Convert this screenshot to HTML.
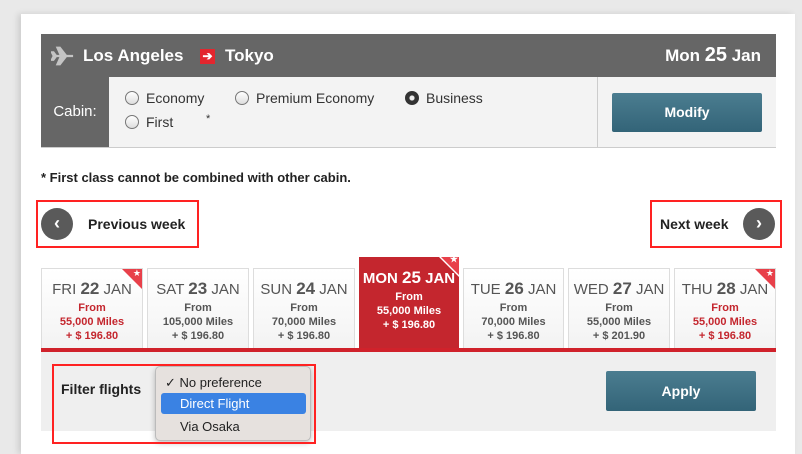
<!DOCTYPE html>
<html><head><meta charset="utf-8"><style>
*{box-sizing:border-box;margin:0;padding:0}
body{width:802px;height:445px;overflow:hidden;background:#e9e9e9;font-family:"Liberation Sans",Arial,sans-serif;position:relative}
.abs{position:absolute}
.panel{left:21px;top:14px;width:774px;height:440px;background:#fff;box-shadow:-3px 0 6px rgba(0,0,0,.12)}
.hdr{left:41px;top:34px;width:735px;height:43px;background:#666;color:#fff;font-weight:bold;font-size:17px}
.cab{left:41px;top:77px;width:735px;height:71px;background:#f3f3f3;border-bottom:1px solid #ccc}
.lbl{left:0;top:0;width:68px;height:70px;background:#666;color:#fff;font-size:15px;line-height:70px;text-align:center}
.rad{font-size:14px;color:#333}
.rad i{display:inline-block;width:14px;height:14px;border:1px solid #777;border-radius:50%;background:linear-gradient(#fff,#ddd);vertical-align:-2px;margin-right:7px}
.btn{background:linear-gradient(#4b7d90,#336478);color:#fff;font-weight:bold;font-size:14px;text-align:center;border-radius:2px}
.red{border:2px solid #f22}
.circ{width:32px;height:32px;border-radius:50%;background:#5a5a5a;color:#fff;text-align:center;line-height:30px;font-size:18px;font-weight:bold}
.tile{top:268px;height:80px;border:1px solid #ddd;border-bottom:none;background:linear-gradient(#fff,#f3f3f3);text-align:center;color:#555;overflow:hidden}
.tile .d{font-size:15px;margin-top:10px}
.tile .d b{font-size:17px}
.tile .p{font-size:11px;font-weight:bold;line-height:14px;margin-top:2px}
.tile.r .p{color:#c4262e}
.tri{position:absolute;right:0;top:0;width:0;height:0;border-top:20px solid #e8404a;border-left:20px solid transparent}
.tri:after{content:"★";position:absolute;right:1px;top:-21px;color:#fff;font-size:9px}
</style></head><body>
<div class="abs panel"></div>
<div class="abs hdr">
 <svg class="abs" style="left:10px;top:11px" width="24" height="22" viewBox="0 0 26 24"><path d="M2 12h22M11 12L7 3h2.5l7 9-7 9H7z M3 12l-2-4h1.5l3 4-3 4H1z" stroke="#c4c4c4" stroke-width="2.5" fill="#c4c4c4"/></svg>
 <span class="abs" style="left:42px;top:12px">Los Angeles</span>
 <span class="abs" style="left:159px;top:15px;width:15px;height:15px;background:#e3262e;color:#fff;font-size:12px;line-height:15px;text-align:center">➔</span>
 <span class="abs" style="left:184px;top:12px">Tokyo</span>
 <span class="abs" style="right:15px;top:10px">Mon <span style="font-size:20px">25</span> Jan</span>
</div>
<div class="abs cab">
 <div class="abs lbl">Cabin:</div>
 <div class="abs rad" style="left:84px;top:13px"><i></i>Economy</div>
 <div class="abs rad" style="left:194px;top:13px"><i></i>Premium Economy</div>
 <div class="abs rad" style="left:364px;top:13px"><i style="background:radial-gradient(#eee 25%,#333 35%);border-color:#333"></i>Business</div>
 <div class="abs rad" style="left:84px;top:37px"><i></i>First</div>
 <div class="abs rad" style="left:165px;top:36px;font-size:11px">*</div>
 <div class="abs" style="left:556px;top:0;width:1px;height:70px;background:#ccc"></div>
 <div class="abs btn" style="left:571px;top:16px;width:150px;height:39px;line-height:39px">Modify</div>
</div>
<div class="abs" style="left:41px;top:170px;font-size:13px;font-weight:bold;color:#222">* First class cannot be combined with other cabin.</div>
<div class="abs red" style="left:36px;top:200px;width:163px;height:48px"></div>
<div class="abs circ" style="left:41px;top:208px">‹</div>
<div class="abs" style="left:88px;top:216px;font-size:14px;font-weight:bold;color:#222">Previous week</div>
<div class="abs red" style="left:650px;top:200px;width:132px;height:48px"></div>
<div class="abs" style="left:660px;top:216px;font-size:14px;font-weight:bold;color:#222">Next week</div>
<div class="abs circ" style="left:743px;top:208px">›</div>

<div class="abs tile r" style="left:41px;width:102px"><div class="tri"></div><div class="d">FRI <b>22</b> JAN</div><div class="p">From<br>55,000 Miles<br>+ $ 196.80</div></div>
<div class="abs tile" style="left:147px;width:102px"><div class="d">SAT <b>23</b> JAN</div><div class="p">From<br>105,000 Miles<br>+ $ 196.80</div></div>
<div class="abs tile" style="left:253px;width:102px"><div class="d">SUN <b>24</b> JAN</div><div class="p">From<br>70,000 Miles<br>+ $ 196.80</div></div>
<div class="abs tile" style="left:359px;top:257px;height:91px;width:100px;background:#c4262e;border:none;color:#fff;font-weight:bold"><div class="tri" style="border-top-color:#fff"></div><div class="tri" style="border-top-width:18px;border-left-width:18px;border-top-color:#e8404a;right:0"></div><div class="d" style="margin-top:11px">MON <b>25</b> JAN</div><div class="p" style="margin-top:2px;color:#fff">From<br>55,000 Miles<br>+ $ 196.80</div></div>
<div class="abs tile" style="left:463px;width:101px"><div class="d">TUE <b>26</b> JAN</div><div class="p">From<br>70,000 Miles<br>+ $ 196.80</div></div>
<div class="abs tile" style="left:568px;width:102px"><div class="d">WED <b>27</b> JAN</div><div class="p">From<br>55,000 Miles<br>+ $ 201.90</div></div>
<div class="abs tile r" style="left:674px;width:102px"><div class="tri"></div><div class="d">THU <b>28</b> JAN</div><div class="p">From<br>55,000 Miles<br>+ $ 196.80</div></div>
<div class="abs" style="left:41px;top:348px;width:735px;height:4px;background:#d0222b"></div>
<div class="abs" style="left:41px;top:352px;width:735px;height:79px;background:#efefef"></div>
<div class="abs btn" style="left:606px;top:371px;width:150px;height:40px;line-height:40px">Apply</div>
<div class="abs" style="left:61px;top:381px;font-size:14px;font-weight:bold;color:#222">Filter flights</div>
<div class="abs" style="left:155px;top:366px;width:156px;height:75px;background:#e6e1de;border:1px solid #bbb;border-radius:5px;box-shadow:0 2px 6px rgba(0,0,0,.25);font-size:13px;color:#222">
 <div class="abs" style="left:9px;top:8px">✓ No preference</div>
 <div class="abs" style="left:5px;top:26px;width:145px;height:21px;background:#3a82e3;border-radius:3px;color:#fff;padding-left:19px;line-height:21px">Direct Flight</div>
 <div class="abs" style="left:24px;top:52px">Via Osaka</div>
</div>
<div class="abs red" style="left:52px;top:364px;width:264px;height:80px"></div>
</body></html>
